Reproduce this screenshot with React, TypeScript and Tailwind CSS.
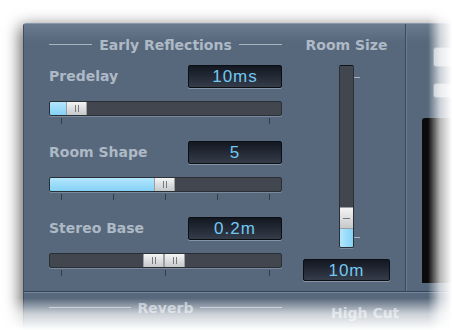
import type { ReactNode } from 'react';

const cn = (...parts: (string | false | undefined)[]) => parts.filter(Boolean).join(' ');

const labelClass = 'text-[14px] font-bold leading-[17px] text-[#aeb9c6] whitespace-nowrap';

function SectionTitle({ title }: { title: string }) {
  return (
    <div className="flex h-[17px] items-start gap-[7px]">
      <span className="mt-[7px] h-px flex-1 bg-[#a9b4c1]" />
      <span className={labelClass}>{title}</span>
      <span className="mt-[7px] h-px flex-1 bg-[#a9b4c1]" />
    </div>
  );
}

function Lcd({ value, className }: { value: string; className?: string }) {
  return (
    <div
      className={cn(
        'flex items-center justify-center rounded-[2px] border border-[#0b0e13] bg-gradient-to-b from-[#131821] to-[#353d4b] shadow-[0_1px_0_#8595a8]',
        className
      )}
    >
      <span className="font-['Liberation_Sans',sans-serif] text-[17px] leading-[21px] tracking-[1px] text-[#72c8f2]">
        {value}
      </span>
    </div>
  );
}

function Grip() {
  return (
    <div className="flex h-full w-[21px] items-center justify-center gap-[2px] border-x border-[#9b9ea3] bg-gradient-to-b from-[#f4f4f4] to-[#c6c8ca]">
      <span className="h-[7px] w-px bg-[#75787c]" />
      <span className="h-[7px] w-px bg-[#75787c]" />
    </div>
  );
}

function HSlider({
  lead,
  filled,
  grips = 1,
  ticks,
}: {
  lead: string;
  filled?: boolean;
  grips?: number;
  ticks: number;
}) {
  return (
    <div>
      <div className="flex h-[15px] overflow-hidden rounded-[2px] border border-[#2a2f36] bg-[#42474f] shadow-[0_1px_0_#7a8a9b]">
        <div
          className={cn(
            lead,
            filled && 'bg-gradient-to-b from-[#b2e6fc] to-[#84d2f6]'
          )}
        />
        {Array.from({ length: grips }).map((_, i) => (
          <Grip key={i} />
        ))}
      </div>
      <div className="mt-[2px] flex h-[6px] justify-between px-[12px]">
        {Array.from({ length: ticks }).map((_, i) => (
          <span key={i} className="w-px bg-[#2f3b49]" />
        ))}
      </div>
    </div>
  );
}

function ParamRow({ label, value }: { label: string; value: string }) {
  return (
    <div className="flex h-[23px] items-center">
      <span className={labelClass}>{label}</span>
      <Lcd value={value} className="ml-auto h-[23px] w-[94px]" />
    </div>
  );
}

function Column({ children, className }: { children: ReactNode; className?: string }) {
  return <div className={cn('flex flex-col', className)}>{children}</div>;
}

export default function App() {
  return (
    <div className="relative h-[330px] w-[452px] overflow-hidden bg-white font-['DejaVu_Sans',sans-serif]">
      <div className="ml-[23px] mt-[23px] h-[330px] w-[440px] rounded-tl-[3px] border-l border-t border-l-[#3f4d5d] border-t-[#8898aa] bg-[linear-gradient(to_bottom,#6a7b8f,#57687c_18px)] shadow-[-3px_3px_16px_rgba(0,0,0,0.6)]">
        <div className="flex h-[267px]">
          {/* left: early reflections + room size */}
          <div className="flex w-[385px] pl-[25px] pt-[13px]">
            <Column className="w-[233px]">
              <SectionTitle title="Early Reflections" />
              <div className="mt-[11px]">
                <ParamRow label="Predelay" value="10ms" />
              </div>
              <div className="mt-[13px]">
                <HSlider lead="w-[16px]" filled ticks={2} />
              </div>
              <div className="mt-[17px]">
                <ParamRow label="Room Shape" value="5" />
              </div>
              <div className="mt-[13px]">
                <HSlider lead="w-[104px]" filled ticks={5} />
              </div>
              <div className="mt-[17px]">
                <ParamRow label="Stereo Base" value="0.2m" />
              </div>
              <div className="mt-[13px]">
                <HSlider lead="w-[93px]" grips={2} ticks={3} />
              </div>
            </Column>

            <Column className="ml-[21px] w-[87px]">
              <span className={cn(labelClass, 'text-center')}>Room Size</span>
              <div className="mt-[11px] flex justify-center">
                <div className="w-[7px]" />
                <div className="flex h-[183px] w-[15px] flex-col justify-end overflow-hidden rounded-[2px] border border-[#2a2f36] border-t-[#101318] bg-[#42474f] shadow-[0_1px_0_#7a8a9b]">
                  <div className="flex h-[22px] items-center justify-center border-y border-[#9b9ea3] bg-gradient-to-b from-[#f4f4f4] to-[#c6c8ca]">
                    <span className="h-px w-[7px] bg-[#75787c]" />
                  </div>
                  <div className="h-[18px] bg-gradient-to-r from-[#b2e6fc] to-[#84d2f6]" />
                </div>
                <div className="flex w-[7px] flex-col justify-between pb-[10px] pt-[12px]">
                  <span className="h-px w-[6px] bg-[#a5b0bd]" />
                  <span className="h-px w-[6px] bg-[#a5b0bd]" />
                </div>
              </div>
              <Lcd value="10m" className="mt-[11px] h-[22px] w-[87px]" />
            </Column>
          </div>

          <div className="w-px bg-[#3a4a5d]" />
          <div className="w-px bg-[#6b7c8f]" />

          {/* right: partially visible controls */}
          <div className="flex flex-1 flex-col pl-[15px]">
            <div className="ml-[11px] mt-[23px] h-[20px] w-[30px] rounded-[3px] border border-[#7a8796] bg-[#b8c1cb]" />
            <div className="ml-[11px] mt-[16px] h-[15px] w-[30px] rounded-[3px] border border-[#7a8796] bg-[#b8c1cb]" />
            <div className="mt-[20px] h-[165px] rounded-tl-[3px] bg-[#0a0a0a]" />
          </div>
        </div>

        <div className="h-px bg-[#33445a]" />
        <div className="h-px bg-[#7688a0]" />

        {/* reverb section */}
        <div className="flex pl-[25px]">
          <div className="mt-[7px] w-[233px]">
            <SectionTitle title="Reverb" />
          </div>
          <span className={cn(labelClass, 'ml-[49px] mt-[12px]')}>High Cut</span>
        </div>
      </div>

      {/* fade-outs at the right and bottom edges */}
      <div className="pointer-events-none absolute bottom-0 right-0 top-0 w-[24px] bg-gradient-to-r from-white/0 via-white/70 to-white" />
      <div className="pointer-events-none absolute bottom-0 left-0 right-0 h-[32px] bg-gradient-to-b from-white/0 via-white/70 to-white" />
    </div>
  );
}
